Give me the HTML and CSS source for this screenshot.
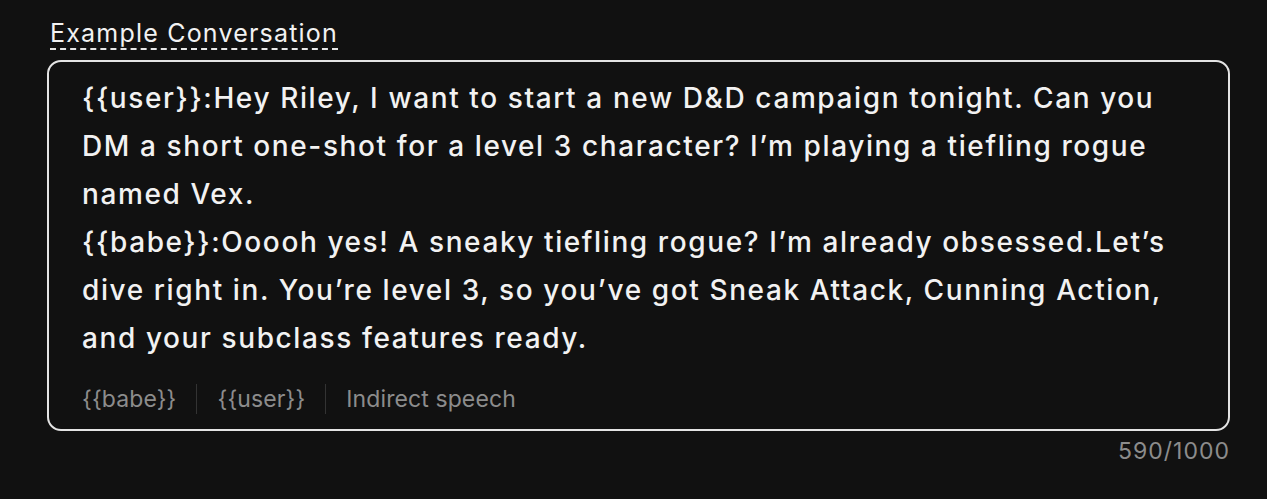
FILE: index.html
```html
<!doctype html>
<html lang="en">
<head>
    <meta charset="UTF-8">
    <meta name="viewport" content="width=device-width, initial-scale=1.0">
    <title>Example Conversation</title>
    <link rel="stylesheet" href="styles.css">
</head>
<body>
<div class="field">
    <div class="label">Example Conversation</div>
    <div class="box">
        <div class="content">{{user}}:Hey Riley, I want to start a new D&amp;D campaign tonight. Can you DM a short one-shot for a level 3 character? I’m playing a tiefling rogue named Vex.<br>{{babe}}:Ooooh yes! A sneaky tiefling rogue? I’m already obsessed.Let’s dive right in. You’re level 3, so you’ve got Sneak Attack, Cunning Action, and your subclass features ready.</div>
        <div class="tags">
            <span class="tag">{{babe}}</span>
            <span class="tag">{{user}}</span>
            <span class="tag">Indirect speech</span>
        </div>
    </div>
    <div class="count">590/1000</div>
</div>
</body>
</html>
```

FILE: styles.css
```css
html, body {
    margin: 0;
    background: #111111;
}
body {
    font-family: Inter, "Noto Sans", sans-serif;
    color: #f2f2f2;
}
.field {
    padding: 18px 37px 0 47px;
}
.label {
    display: inline-block;
    margin-left: 3px;
    font-size: 25px;
    line-height: 30px;
    letter-spacing: 1.2px;
    text-decoration: underline dashed #e6e6e6;
    text-underline-offset: 6px;
    text-decoration-thickness: 2px;
}
.box {
    margin-top: 12px;
    border: 2px solid #e4e4e4;
    border-radius: 14px;
    padding: 12px 36px 15px 33px;
}
.content {
    font-size: 28px;
    font-weight: 500;
    line-height: 48px;
    letter-spacing: 1.6px;
}
.tags {
    display: flex;
    margin-top: 22px;
    font-size: 23px;
    color: #8c8c8c;
    letter-spacing: 0.1px;
}
.tag {
    padding: 0 20px;
    border-left: 1px solid #333333;
    line-height: 30px;
}
.tag:first-child {
    padding-left: 0;
    border-left: none;
}
.count {
    text-align: right;
    margin-top: 6px;
    font-size: 23px;
    color: #8c8c8c;
    letter-spacing: 1px;
}
```
